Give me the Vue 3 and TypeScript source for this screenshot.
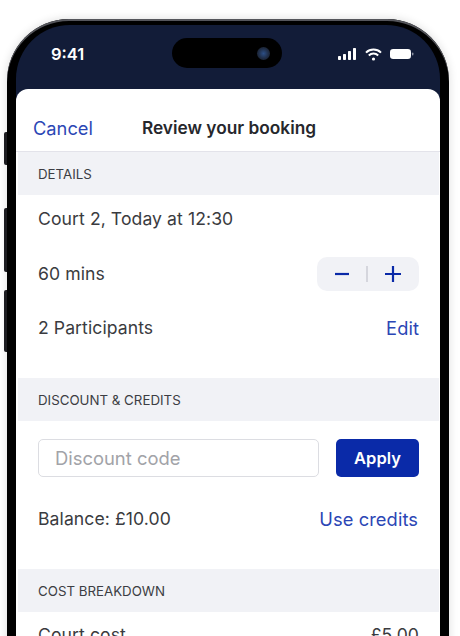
<script setup lang="ts">
const detailRows = ['Court 2, Today at 12:30']
</script>

<template>
  <div class="page">
    <div class="phone">
      <span class="side-btn mute"></span>
      <span class="side-btn vol-up"></span>
      <span class="side-btn vol-down"></span>
      <div class="screen">
        <div class="status">
          <span class="time">9:41</span>
          <div class="island"><span class="camera"></span></div>
          <div class="status-icons">
            <svg width="19" height="12" viewBox="0 0 19 12" fill="#fff">
              <rect x="0" y="8" width="3" height="4" rx="0.8" />
              <rect x="5" y="6" width="3" height="6" rx="0.8" />
              <rect x="10" y="3" width="3" height="9" rx="0.8" />
              <rect x="15" y="0" width="3" height="12" rx="0.8" />
            </svg>
            <svg width="17" height="13" viewBox="0 0 17 13" fill="none" stroke="#fff" stroke-width="2">
              <path d="M1 4.6a10.8 10.8 0 0 1 15 0" />
              <path d="M3.8 7.5a6.8 6.8 0 0 1 9.4 0" />
              <circle cx="8.5" cy="11" r="1.6" fill="#fff" stroke="none" />
            </svg>
            <svg width="24" height="12" viewBox="0 0 24 12">
              <rect x="0" y="1" width="21" height="10" rx="3.2" fill="#fff" />
              <rect x="22" y="4.5" width="1.4" height="3" rx="0.7" fill="#8d93a3" />
            </svg>
          </div>
        </div>
        <div class="sheet">
          <header class="nav">
            <a class="link cancel">Cancel</a>
            <h1 class="title">Review your booking</h1>
          </header>

          <h2 class="section-head">DETAILS</h2>
          <section class="details">
            <div v-for="row in detailRows" :key="row" class="row">
              <span>{{ row }}</span>
            </div>
            <div class="row">
              <span>60 mins</span>
              <div class="stepper">
                <svg width="16" height="16" viewBox="0 0 16 16"><path d="M1 8h14" stroke="#0a2aa8" stroke-width="2.2" /></svg>
                <span class="divider"></span>
                <svg width="18" height="18" viewBox="0 0 18 18"><path d="M1 9h16M9 1v16" stroke="#0a2aa8" stroke-width="2.2" /></svg>
              </div>
            </div>
            <div class="row">
              <span>2 Participants</span>
              <a class="link">Edit</a>
            </div>
          </section>

          <h2 class="section-head">DISCOUNT &amp; CREDITS</h2>
          <section class="discount">
            <div class="code-row">
              <div class="code-input">Discount code</div>
              <button class="apply" type="button">Apply</button>
            </div>
            <div class="row">
              <span>Balance: £10.00</span>
              <a class="link">Use credits</a>
            </div>
          </section>

          <h2 class="section-head">COST BREAKDOWN</h2>
          <section class="costs">
            <div class="row">
              <span>Court cost</span>
              <span>£5.00</span>
            </div>
          </section>
        </div>
      </div>
    </div>
  </div>
</template>

<style>
html, body { margin: 0; background: #fff; }
</style>

<style scoped>
.page {
  width: 460px;
  height: 636px;
  overflow: hidden;
  padding: 19px 0 0 7px;
  box-sizing: border-box;
  font-family: Inter, "Liberation Sans", sans-serif;
  color: #3a3b40;
  background: #fff;
}
.phone {
  position: relative;
  width: 442px;
  height: 700px;
  box-sizing: border-box;
  padding: 6px 9px 0;
  background: #000;
  border-radius: 62px 62px 0 0;
  box-shadow: 0 0 10px rgba(0, 0, 0, 0.14), inset 0 2px 0 #55565c;
}
.side-btn {
  position: absolute;
  left: -3px;
  width: 3px;
  background: #1c1c20;
  border-radius: 2px 0 0 2px;
}
.mute { top: 113px; height: 33px; }
.vol-up { top: 189px; height: 64px; }
.vol-down { top: 271px; height: 62px; }
.screen {
  height: 100%;
  background: #121c38;
  border-radius: 54px 54px 0 0;
  overflow: hidden;
}
.status {
  height: 64px;
  position: relative;
  display: flex;
  align-items: flex-start;
  justify-content: space-between;
  padding: 15px 26px 0 35px;
  box-sizing: border-box;
}
.time {
  color: #fff;
  font-size: 16.5px;
  font-weight: 600;
  line-height: 28px;
}
.island {
  position: absolute;
  left: 156px;
  top: 13px;
  width: 110px;
  height: 30px;
  background: #000;
  border-radius: 16px;
  display: flex;
  align-items: center;
  justify-content: flex-end;
  padding-right: 12px;
  box-sizing: border-box;
}
.camera {
  width: 13px;
  height: 13px;
  border-radius: 50%;
  background: radial-gradient(circle at 50% 50%, #2c4f86 0, #1f2c44 55%, #16191f 100%);
}
.status-icons {
  display: flex;
  align-items: center;
  gap: 8px;
  height: 28px;
}
.sheet {
  background: #fff;
  border-radius: 12px 12px 0 0;
  height: 100%;
}
.nav {
  height: 63px;
  position: relative;
  display: flex;
  align-items: center;
  justify-content: center;
  padding-top: 15px;
  box-sizing: border-box;
  border-bottom: 1.5px solid #e3e3ea;
}
.title {
  margin: 0;
  font-size: 17.3px;
  font-weight: 600;
  color: #26272c;
  transform: translateX(1px);
}
.cancel {
  position: absolute;
  left: 17px;
  top: 28px;
  line-height: 22px;
}
.link {
  color: #2b46b5;
  font-size: 18.3px;
}
.section-head {
  margin: 0 1.5px;
  height: 43px;
  background: #f1f2f6;
  display: flex;
  align-items: center;
  padding-left: 20.5px;
  font-size: 13.3px;
  font-weight: 400;
  color: #3c3d43;
}
.row {
  height: 24px;
  display: flex;
  align-items: center;
  justify-content: space-between;
  font-size: 17.6px;
  letter-spacing: 0.08px;
  line-height: 24px;
}
.details {
  display: flex;
  flex-direction: column;
  gap: 30.5px;
  padding: 12px 21px 38px 22px;
}
.stepper {
  width: 102px;
  height: 34px;
  background: #f1f2f6;
  border-radius: 10px;
  display: flex;
  align-items: center;
  justify-content: center;
  gap: 16px;
  flex: none;
}
.divider {
  width: 1.5px;
  height: 16px;
  background: #d5d6dd;
}
.discount {
  padding: 18px 22px 38px 22px;
}
.code-row {
  display: flex;
  gap: 17px;
  margin: 0 -1px 30px 0;
}
.code-input {
  flex: 1;
  height: 38px;
  box-sizing: border-box;
  border: 1.5px solid #dcdde2;
  border-radius: 5px;
  padding-left: 16px;
  font-size: 18.4px;
  line-height: 37px;
  color: #a2a3a8;
}
.apply {
  width: 83px;
  height: 38px;
  border: 0;
  border-radius: 5px;
  background: #0a2aa8;
  color: #fff;
  font: 600 16.5px Inter, "Liberation Sans", sans-serif;
}
.costs {
  padding: 11px 21px 0 22px;
}
</style>
